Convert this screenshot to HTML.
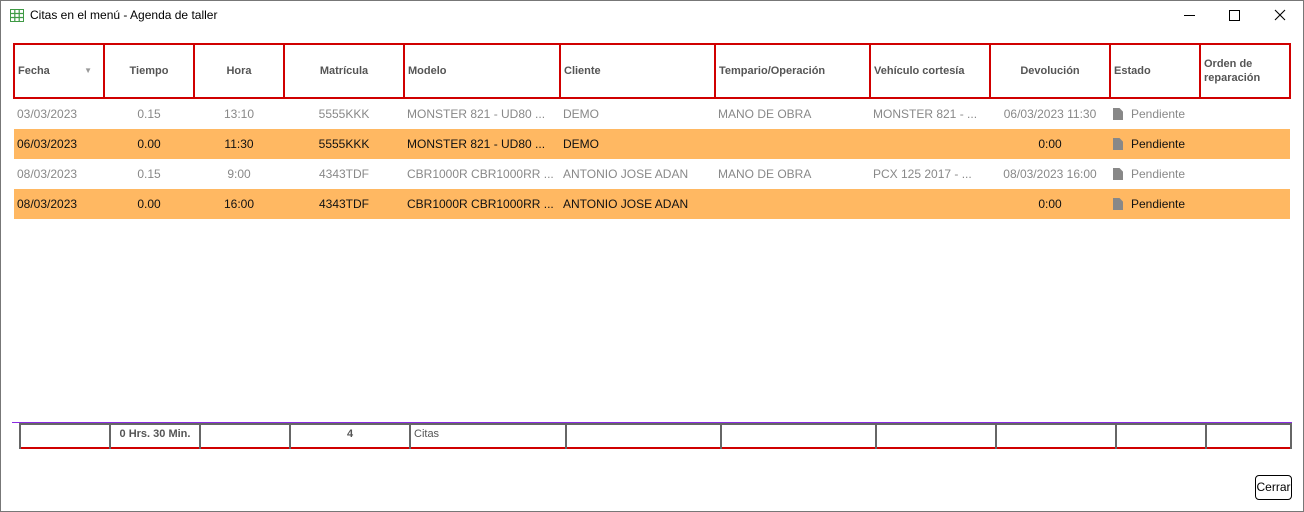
<!DOCTYPE html>
<html><head><meta charset="utf-8"><style>
*{margin:0;padding:0;box-sizing:border-box}
body{width:1304px;height:512px;background:#fff;font-family:"Liberation Sans",sans-serif;position:relative;overflow:hidden;box-shadow:inset 0 0 0 1px #777}
.title{position:absolute;left:30px;top:8px;font-size:12px;color:#000}
table{border-collapse:collapse;table-layout:fixed;position:absolute}
#hd{left:13px;top:43px;width:1276px}
#hd td{border:2px solid #d00000;height:54px;font-size:11px;font-weight:bold;color:#555;padding:0 3px;line-height:14px}
#bd{left:14px;top:99px;width:1276px}
#bd td{height:30px;font-size:12px;color:#888;padding:0 3px;white-space:nowrap;overflow:hidden}
#bd tr.o td{background:#ffb862;color:#111}
.c{text-align:center}
#ft{left:19px;top:423px;width:1271px;border-bottom:2px solid #d00000;border-right:2px solid #d00000}
#ft td{border:2px solid #666;border-bottom:none;height:24px;font-size:11px;font-weight:bold;color:#555;vertical-align:top;padding:3px 3px 0}
.ico{display:inline-block;width:10px;height:12px;background:#888;vertical-align:-2px;margin-right:8px;clip-path:polygon(0 0,65% 0,100% 30%,100% 100%,0 100%)}
.p{font-size:13px}
</style></head><body>
<svg style="position:absolute;left:10px;top:9px" width="14" height="13" viewBox="0 0 14 13"><rect x="0.5" y="0.5" width="13" height="12" fill="#fff" stroke="#3f9a45"/><path d="M0 4.5H14M0 8.5H14M4.8 0V13M9.2 0V13" stroke="#3f9a45" stroke-width="1.2"/></svg>
<div class="title">Citas en el menú - Agenda de taller</div>
<div style="position:absolute;left:1184px;top:15px;width:11px;height:1px;background:#000"></div>
<div style="position:absolute;left:1229px;top:10px;width:11px;height:11px;border:1px solid #000"></div>
<svg style="position:absolute;left:1274px;top:9px" width="12" height="12"><path d="M1 1L11 11M11 1L1 11" stroke="#000" stroke-width="1.1"/></svg>
<table id="hd"><colgroup><col style="width:90px"><col style="width:90px"><col style="width:90px"><col style="width:120px"><col style="width:156px"><col style="width:155px"><col style="width:155px"><col style="width:120px"><col style="width:120px"><col style="width:90px"><col style="width:90px"></colgroup>
<tr><td>Fecha<span style="float:right;margin-right:8px;font-size:8px;color:#999">▼</span></td><td class="c">Tiempo</td><td class="c">Hora</td><td class="c">Matrícula</td><td>Modelo</td><td>Cliente</td><td>Tempario/Operación</td><td>Vehículo cortesía</td><td class="c">Devolución</td><td>Estado</td><td>Orden de reparación</td></tr></table>
<table id="bd"><colgroup><col style="width:90px"><col style="width:90px"><col style="width:90px"><col style="width:120px"><col style="width:156px"><col style="width:155px"><col style="width:155px"><col style="width:120px"><col style="width:120px"><col style="width:90px"><col style="width:90px"></colgroup>
<tr><td>03/03/2023</td><td class="c">0.15</td><td class="c">13:10</td><td class="c">5555KKK</td><td>MONSTER 821 - UD80 ...</td><td>DEMO</td><td>MANO DE OBRA</td><td>MONSTER 821 - ...</td><td class="c">06/03/2023 11:30</td><td class="p"><span class="ico"></span>Pendiente</td><td></td></tr>
<tr class="o"><td>06/03/2023</td><td class="c">0.00</td><td class="c">11:30</td><td class="c">5555KKK</td><td>MONSTER 821 - UD80 ...</td><td>DEMO</td><td></td><td></td><td class="c">0:00</td><td class="p"><span class="ico"></span>Pendiente</td><td></td></tr>
<tr><td>08/03/2023</td><td class="c">0.15</td><td class="c">9:00</td><td class="c">4343TDF</td><td>CBR1000R CBR1000RR ...</td><td>ANTONIO JOSE ADAN</td><td>MANO DE OBRA</td><td>PCX 125 2017 - ...</td><td class="c">08/03/2023 16:00</td><td class="p"><span class="ico"></span>Pendiente</td><td></td></tr>
<tr class="o"><td>08/03/2023</td><td class="c">0.00</td><td class="c">16:00</td><td class="c">4343TDF</td><td>CBR1000R CBR1000RR ...</td><td>ANTONIO JOSE ADAN</td><td></td><td></td><td class="c">0:00</td><td class="p"><span class="ico"></span>Pendiente</td><td></td></tr>
</table>
<div style="position:absolute;left:12px;top:422px;width:1280px;height:1px;background:#8a2be2"></div>
<table id="ft"><colgroup><col style="width:90px"><col style="width:90px"><col style="width:90px"><col style="width:120px"><col style="width:156px"><col style="width:155px"><col style="width:155px"><col style="width:120px"><col style="width:120px"><col style="width:90px"><col style="width:85px"></colgroup>
<tr><td></td><td class="c">0 Hrs. 30 Min.</td><td></td><td class="c">4</td><td style="font-weight:normal">Citas</td><td></td><td></td><td></td><td></td><td></td><td></td></tr></table>
<div style="position:absolute;left:1255px;top:475px;width:37px;height:25px;border:1px solid #000;border-radius:4px;font-size:12px;line-height:23px;text-align:center">Cerrar</div>
</body></html>
